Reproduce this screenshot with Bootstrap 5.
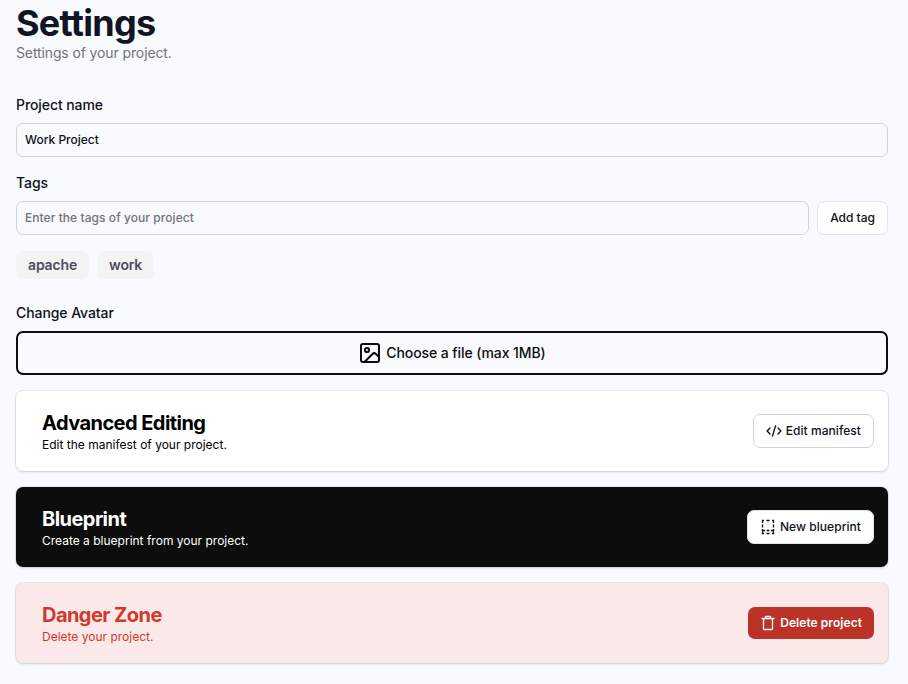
<!DOCTYPE html>
<html lang="en">
<head>
<meta charset="utf-8">
<meta name="viewport" content="width=device-width, initial-scale=1">
<title>Settings</title>
<link href="https://cdn.jsdelivr.net/npm/bootstrap@5.3.0/dist/css/bootstrap.min.css" rel="stylesheet">
<style>
body{font-family:Inter,sans-serif;background:#f8fafe;color:#0f1020;font-size:14px;line-height:20px}
.page{padding:3px 20px 20px 16px}
.title{font-size:36px;line-height:40px;font-weight:700;letter-spacing:-.72px;color:#111424}
.sub{color:#71717e;letter-spacing:-.12px;margin-bottom:32px}
.lbl{font-weight:500;margin-bottom:8px;display:block;letter-spacing:-.08px}
.field{height:34px;font-size:12px;font-weight:500;padding:0 8px 2px;background:#f9fafb;border:1px solid #d1d5db;border-radius:7px;color:#0f1020}
.field::placeholder{color:#71717e;letter-spacing:.06px}
.act{height:34px;font-size:12px;font-weight:500;line-height:16px;padding:0 12px;border-radius:7px;background:#fff;border:1px solid #e4e4e9;color:#0f1020;white-space:nowrap}
.tag{height:28px;padding:0 12px;border-radius:7px;background:#f4f4f5;color:#4b4e5d;font-weight:600;letter-spacing:-.16px}
.file-pick{height:44px;border:2px solid #0d0d0d;border-radius:7px;font-weight:500;color:#0d0d0d;gap:5px;letter-spacing:-.08px;padding-left:1px}
.panel{height:80px;border-radius:7px;padding:0 14px 0 26px;margin-top:16px;background:#fff;color:#000;box-shadow:0 0 0 1px rgba(17,24,39,.07),0 1px 3px rgba(0,0,0,.12)}
.panel h2{font-size:20px;line-height:28px;font-weight:700;letter-spacing:-.55px;margin:0}
.panel p{font-size:12px;line-height:16px;margin:0}
.panel .act{display:flex;align-items:center;gap:4px;letter-spacing:.06px}
.panel.dark{background:#0d0d0d;color:#fff}
.panel.danger{background:#fbe8e8;color:#d03a2d}
.act.outlined{border-color:#d1d5db}
.act.del{background:#bb3226;border:0;color:#fff;height:32px;font-weight:600}
svg{flex:none}
</style>
<script src="https://cdn.jsdelivr.net/npm/bootstrap@5.3.0/dist/js/bootstrap.bundle.min.js"></script>
</head>
<body>
<main class="page">
  <h1 class="title mb-0">Settings</h1>
  <p class="sub">Settings of your project.</p>
  <label class="lbl" for="name">Project name</label>
  <input id="name" class="field w-100 d-block" value="Work Project">
  <label class="lbl mt-3" for="tags">Tags</label>
  <div class="d-flex gap-2">
    <input id="tags" class="field flex-grow-1" placeholder="Enter the tags of your project">
    <button class="act">Add tag</button>
  </div>
  <div class="d-flex gap-2 mt-3">
    <span class="tag d-flex align-items-center">apache</span>
    <span class="tag d-flex align-items-center">work</span>
  </div>
  <span class="lbl mt-4">Change Avatar</span>
  <div class="file-pick d-flex align-items-center justify-content-center" role="button">
    <svg width="22" height="22" viewBox="0 0 22 22" fill="none" stroke="currentColor" stroke-width="2" stroke-linecap="round" stroke-linejoin="round"><rect x="2" y="2" width="18" height="18" rx="2"/><circle cx="8" cy="8" r="2.1"/><path d="M5.500 20 13.500 12a2.500 2.500 0 0 1 3.500 0L20 15"/></svg>
    <span>Choose a file (max 1MB)</span>
  </div>
  <section class="panel d-flex align-items-center justify-content-between">
    <div><h2>Advanced Editing</h2><p>Edit the manifest of your project.</p></div>
    <button class="act outlined"><svg width="16" height="16" viewBox="0 0 16 16" fill="none" stroke="currentColor" stroke-width="1.3" stroke-linecap="round" stroke-linejoin="round"><path d="M4 5 1.100 8 4 11M12 5l2.900 3-2.900 3M9.600 2.800 6.400 13.200"/></svg>Edit manifest</button>
  </section>
  <section class="panel dark d-flex align-items-center justify-content-between">
    <div><h2>Blueprint</h2><p>Create a blueprint from your project.</p></div>
    <button class="act"><svg width="16" height="16" viewBox="0 0 16 16" fill="none" stroke="currentColor" stroke-width="1.3"><path d="M2.500 4V1.500H4M6.500 1.500h3M12 1.500h1.500V4M2.500 5.500v3M13.500 5.500v3M2.500 10v4.500H4M13.500 10v4.500H12M6.500 14.500h3M2.500 11.500H5M6.500 11.500h3M11 11.500h2.500"/></svg>New blueprint</button>
  </section>
  <section class="panel danger d-flex align-items-center justify-content-between">
    <div><h2>Danger Zone</h2><p>Delete your project.</p></div>
    <button class="act del"><svg width="16" height="16" viewBox="0 0 16 16" fill="none" stroke="currentColor" stroke-width="1.3" stroke-linecap="round" stroke-linejoin="round"><path d="M2 3.500h12M5.500 3.500v-2h5v2M3.500 3.500v10a1 1 0 0 0 1 1h7a1 1 0 0 0 1-1v-10"/></svg>Delete project</button>
  </section>
</main>
</body>
</html>
